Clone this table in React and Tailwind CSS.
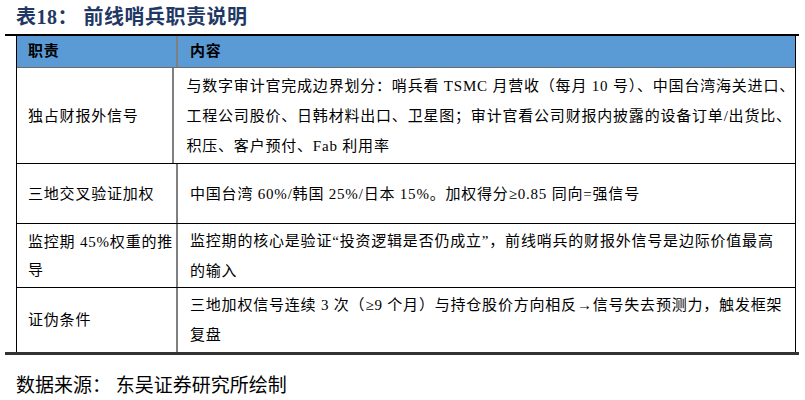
const ROWS = [
  {
    h: 'h-[96px]',
    name: ['独占财报外信号'],
    lines: [
      '与数字审计官完成边界划分：哨兵看 TSMC 月营收（每月 10 号）、中国台湾海关进口、',
      '工程公司股价、日韩材料出口、卫星图；审计官看公司财报内披露的设备订单/出货比、',
      '积压、客户预付、Fab 利用率',
    ],
  },
  {
    h: 'h-[60px]',
    name: ['三地交叉验证加权'],
    lines: ['中国台湾 60%/韩国 25%/日本 15%。加权得分≥0.85 同向=强信号'],
  },
  {
    h: 'h-[64px]',
    name: ['监控期 45%权重的推', '导'],
    lines: [
      '监控期的核心是验证“投资逻辑是否仍成立”，前线哨兵的财报外信号是边际价值最高',
      '的输入',
    ],
  },
  {
    h: 'h-[64px]',
    name: ['证伪条件'],
    lines: [
      '三地加权信号连续 3 次（≥9 个月）与持仓股价方向相反→信号失去预测力，触发框架',
      '复盘',
    ],
  },
]

export default function App() {
  return (
    <div className="w-[805px] h-[400px] bg-white text-black font-['Liberation_Serif','Noto_Sans_CJK_SC',serif]">
      {/* Title */}
      <div className="h-[34px] pl-[16px] flex items-center text-[20px] font-bold text-[#1f3864] tracking-[0.5px]">
        表18：&nbsp;前线哨兵职责说明
      </div>
      <div className="ml-[5px] w-[794px] h-[2px] bg-black" />

      {/* Table */}
      <div className="ml-[16px] w-[780px] border-l border-r border-black text-[15px] tracking-[0.8px]">
        <div className="h-[32px] flex bg-[#5b9bd5] border-b border-[#6b6b6b] font-bold">
          <div className="w-[161px] pl-[11px] flex items-center border-r-2 border-[#7f7f7f]">职责</div>
          <div className="flex-1 pl-[12px] flex items-center">内容</div>
        </div>
        {ROWS.map((r, i) => (
          <div
            key={i}
            className={`${r.h} flex ${i < ROWS.length - 1 ? 'border-b border-black' : ''}`}
          >
            <div className="w-[161px] pl-[11px] flex flex-col justify-center border-r-2 border-[#7f7f7f] leading-[28px]">
              {r.name.map((t, j) => (
                <div key={j} className="whitespace-nowrap">{t}</div>
              ))}
            </div>
            <div className="flex-1 pl-[12px] flex flex-col justify-center leading-[30px]">
              {r.lines.map((t, j) => (
                <div key={j} className="whitespace-nowrap">{t}</div>
              ))}
            </div>
          </div>
        ))}
      </div>
      <div className="ml-[5px] w-[794px] h-[3px] bg-[#333333]" />

      {/* Source */}
      <div className="pl-[16px] mt-[17px] text-[19px] leading-[28px]">
        数据来源：&nbsp;东吴证券研究所绘制
      </div>
    </div>
  )
}
